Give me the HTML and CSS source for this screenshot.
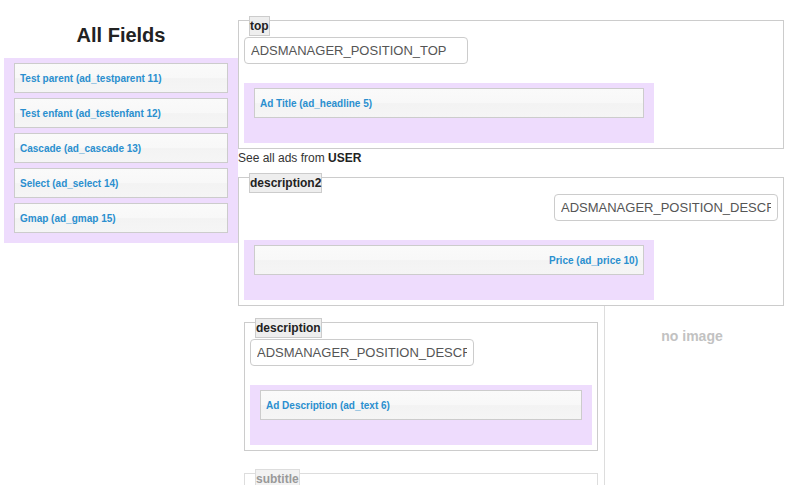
FILE: index.html
```html
<!DOCTYPE html>
<html>
<head>
<meta charset="utf-8">
<link rel="stylesheet" href="styles.css">
</head>
<body>
<div class="page">
  <div class="sidebar">
    <h2 class="sidebar-title">All Fields</h2>
    <div class="fields fields-all">
      <div class="field">Test parent (ad_testparent 11)</div>
      <div class="field">Test enfant (ad_testenfant 12)</div>
      <div class="field">Cascade (ad_cascade 13)</div>
      <div class="field">Select (ad_select 14)</div>
      <div class="field">Gmap (ad_gmap 15)</div>
    </div>
  </div>
  <div class="main">
    <div class="pos">
      <div class="pos-legend">top</div>
      <input class="pos-input" type="text" value="ADSMANAGER_POSITION_TOP">
      <div class="fields pos-fields">
        <div class="field">Ad Title (ad_headline 5)</div>
      </div>
    </div>
    <div class="user-line">See all ads from <b>USER</b></div>
    <div class="pos">
      <div class="pos-legend">description2</div>
      <input class="pos-input pos-input-right" type="text" value="ADSMANAGER_POSITION_DESCRIPTION2">
      <div class="fields pos-fields">
        <div class="field field-right">Price (ad_price 10)</div>
      </div>
    </div>
    <div class="lower">
      <div class="lower-left">
        <div class="pos pos-inner">
          <div class="pos-legend">description</div>
          <input class="pos-input" type="text" value="ADSMANAGER_POSITION_DESCRIPTION">
          <div class="fields pos-fields pos-fields-full">
            <div class="field">Ad Description (ad_text 6)</div>
          </div>
        </div>
        <div class="pos pos-inner pos-faded">
          <div class="pos-legend">subtitle</div>
          <input class="pos-input" type="text" value="ADSMANAGER_POSITION_SUBTITLE">
          <div class="fields pos-fields pos-fields-full"></div>
        </div>
      </div>
      <div class="lower-right">
        <div class="no-image">no image</div>
      </div>
    </div>
  </div>
</div>
</body>
</html>
```

FILE: styles.css
```css
html, body {
  margin: 0;
  padding: 0;
  overflow: hidden;
  background: #fff;
}
body {
  font-family: "Liberation Sans", Arial, sans-serif;
  color: #333;
}
.page {
  display: flex;
  align-items: flex-start;
  padding-left: 4px;
}
.sidebar {
  width: 234px;
  flex: none;
}
.sidebar-title {
  margin: 0 0 11px;
  padding-top: 23px;
  font-size: 20px;
  line-height: 24px;
  font-weight: bold;
  color: #222;
  text-align: center;
}
.fields {
  background: #eedcfd;
  padding: 5px 10px;
  box-sizing: border-box;
}
.field {
  display: flex;
  align-items: center;
  height: 30px;
  box-sizing: border-box;
  margin-bottom: 5px;
  padding: 0 5px;
  border: 1px solid #ccc;
  background: linear-gradient(to bottom, #fafafa 0%, #f8f8f8 50%, #f3f3f3 52%, #f5f5f5 100%);
  color: #2a8fcf;
  font-size: 10px;
  font-weight: bold;
  white-space: nowrap;
}
.field-right {
  justify-content: flex-end;
}
.main {
  width: 546px;
  flex: none;
  padding-top: 20px;
}
.pos {
  border: 1px solid #ccc;
  padding: 0 5px 5px;
}
.pos-legend {
  width: fit-content;
  margin: -5px 0 0 5px;
  background: #eee;
  border: 1px solid #ccc;
  font-size: 12px;
  line-height: 18px;
  font-weight: bold;
  color: #222;
}
.pos-input {
  display: block;
  width: 224px;
  height: 27px;
  box-sizing: border-box;
  margin: 1px 0 0;
  padding: 0 6px;
  border: 1px solid #ccc;
  border-radius: 4px;
  background: #fff;
  font-family: "Liberation Sans", Arial, sans-serif;
  font-size: 13px;
  color: #555;
  outline: none;
}
.pos-input-right {
  margin-left: auto;
}
.pos-fields {
  width: 410px;
  min-height: 60px;
  margin-top: 19px;
}
.pos-fields-full {
  width: auto;
}
.user-line {
  margin: 1px 0 11px;
  font-size: 12px;
  line-height: 16px;
  color: #333;
}
.user-line b {
  color: #222;
}
.lower {
  display: flex;
  align-items: stretch;
}
.lower-left {
  width: 366px;
  flex: none;
  padding-top: 16px;
  padding-bottom: 40px;
}
.pos-inner {
  margin: 0 6px 22px;
}
.pos-faded {
  border-color: #ddd;
}
.pos-faded .pos-legend {
  color: #999;
  border-color: #ddd;
  background: #f2f2f2;
}
.pos-faded .pos-input {
  color: #aaa;
  border-color: #e2e2e2;
}
.lower-right {
  width: 174px;
  flex: none;
  border-left: 1px solid #ddd;
  padding-top: 22px;
}
.no-image {
  text-align: center;
  font-size: 14px;
  line-height: 16px;
  font-weight: bold;
  color: #c2c2c2;
}
```
